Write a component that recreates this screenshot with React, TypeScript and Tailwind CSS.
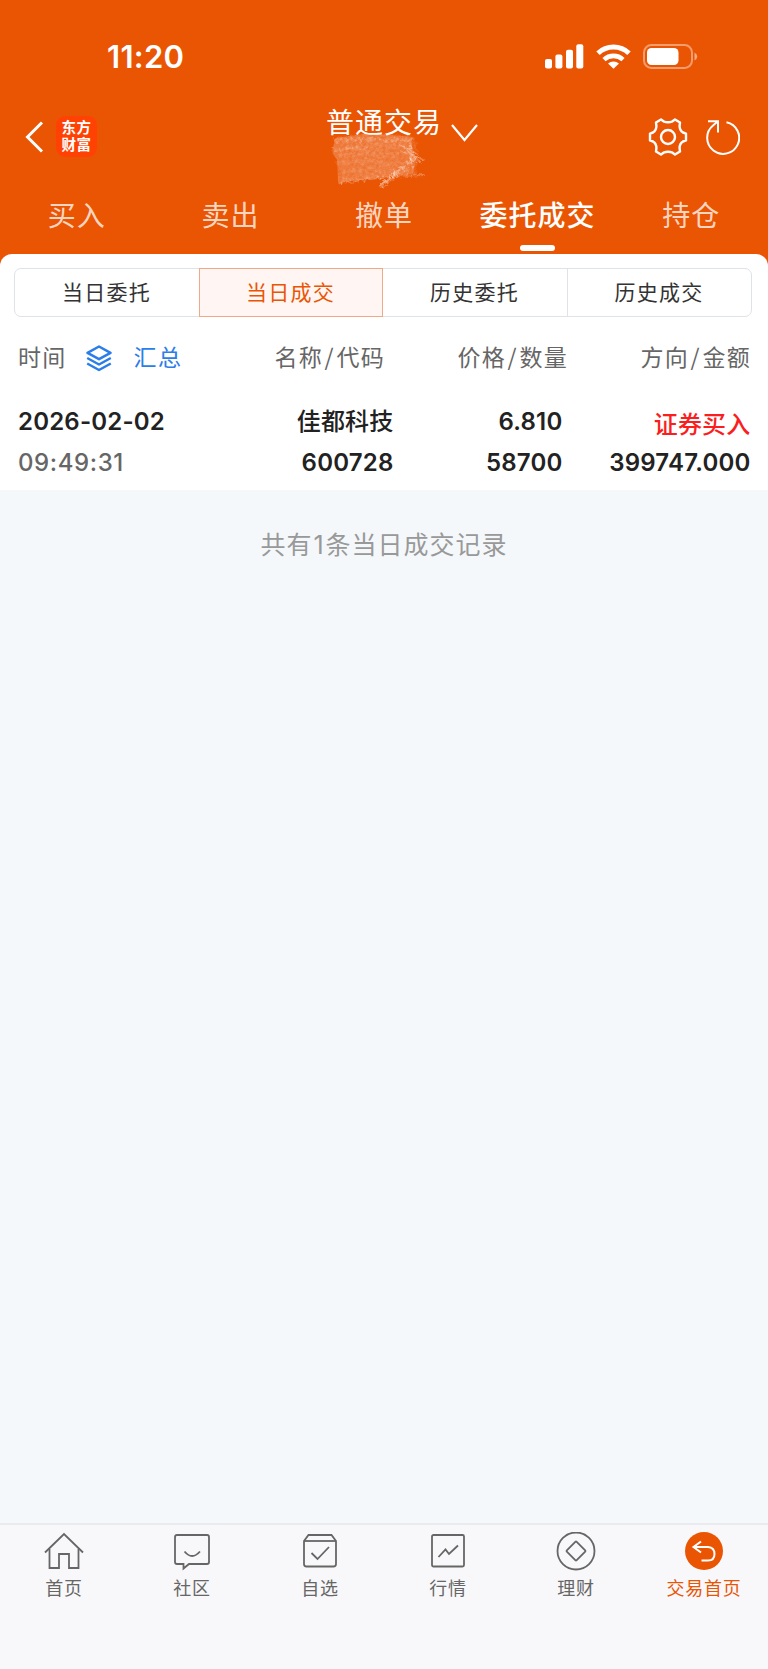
import React, { useState } from 'react';
import clsx from 'clsx';

interface Deal {
  date: string;
  time: string;
  name: string;
  code: string;
  price: string;
  amount: string;
  direction: string;
  total: string;
}

const tabs = ['买入', '卖出', '撤单', '委托成交', '持仓'];
const segments = ['当日委托', '当日成交', '历史委托', '历史成交'];
const columns = [['名称', '代码'], ['价格', '数量'], ['方向', '金额']];

const deals: Deal[] = [
  {
    date: '2026-02-02',
    time: '09:49:31',
    name: '佳都科技',
    code: '600728',
    price: '6.810',
    amount: '58700',
    direction: '证券买入',
    total: '399747.000',
  },
];

const StatusBar = () => (
  <div className="flex h-[94px] items-start justify-between pl-[107px] pr-[70px] pt-[41px]">
    <span className="font-['Inter',sans-serif] text-[31px] font-semibold leading-[32px] tracking-[0.3px]">11:20</span>
    <div className="flex items-center pt-[3px]">
      <svg width="39" height="25" viewBox="0 0 39 25" fill="currentColor">
        <rect x="0" y="15" width="7" height="9.5" rx="2" />
        <rect x="10.4" y="10.5" width="7" height="14" rx="2" />
        <rect x="21" y="5.8" width="7" height="18.7" rx="2" />
        <rect x="31.3" y="0.3" width="7" height="24.2" rx="2" />
      </svg>
      <svg className="ml-[12px]" width="35" height="25" viewBox="0 0 35 25" fill="none" stroke="currentColor">
        <path d="M2 9.2A22.5 22.5 0 0 1 33 9.2" strokeWidth="5" />
        <path d="M8 15.6A14 14 0 0 1 27 15.6" strokeWidth="4.6" />
        <path d="M12 19.5A8.2 8.2 0 0 1 23 19.5L17.5 24.8Z" fill="currentColor" stroke="none" />
      </svg>
      <svg className="ml-[12px]" width="55" height="25" viewBox="0 0 55 25" fill="none">
        <rect x="1" y="1" width="48" height="23" rx="7.5" stroke="white" strokeOpacity="0.42" strokeWidth="2" />
        <rect x="4" y="4" width="31.5" height="17" rx="4.5" fill="white" />
        <path d="M51.5 8.5Q54.2 9.8 54.2 12.5T51.5 16.5Z" fill="white" fillOpacity="0.5" />
      </svg>
    </div>
  </div>
);

const Scribble = () => (
  <svg className="absolute left-[27px] top-[36px]" width="120" height="62" viewBox="0 0 120 62" fill="none">
    <defs>
      <filter id="chalk" x="-5%" y="-5%" width="110%" height="110%">
        <feTurbulence type="fractalNoise" baseFrequency="0.3" numOctaves="3" seed="4" result="noise" />
        <feDisplacementMap in="SourceGraphic" in2="noise" scale="6" result="rough" />
        <feColorMatrix in="noise" type="matrix" values="0 0 0 0 1  0 0 0 0 1  0 0 0 0 1  0 1.6 0 0 -0.2" result="grain" />
        <feComposite in="rough" in2="grain" operator="in" />
      </filter>
    </defs>
    <path d="M9 8L44 3L86 7L86 16L90 30L87 44L62 46L12 53L11 30L7 24Z" fill="white" fillOpacity="0.15" />
    <g filter="url(#chalk)" stroke="white" strokeLinecap="round">
      <path d="M8 8L44 3L88 6L92 23L90 44L60 47L12 54L12 30L6 24Z" fill="white" fillOpacity="0.14" stroke="none" />
      <path d="M10 10L84 8L14 18L92 14L12 26L88 22L10 34L86 32L14 42L88 40L14 50L76 44" strokeOpacity="0.12" strokeWidth="3" />
      <path d="M10 11L52 9M8 20L40 18M60 11L86 10" strokeOpacity="0.2" strokeWidth="4" />
      <path d="M72 14L92 24L80 20L94 32M84 12L86 38M78 22L98 30" strokeOpacity="0.45" strokeWidth="1.8" />
      <path d="M56 55L66 46L90 28" strokeOpacity="0.45" strokeWidth="3.5" />
      <path d="M56 56L68 45" strokeOpacity="0.35" strokeWidth="5" />
      <path d="M14 53L60 47L98 45" strokeOpacity="0.32" strokeWidth="2" />
    </g>
  </svg>
);

const TitleBar = () => (
  <div className="grid h-[90px] grid-cols-[1fr_170px_1fr] items-start">
    <div className="flex items-center pl-[25px] pt-[22px]">
      <svg width="19" height="32" viewBox="0 0 19 32" fill="none" stroke="currentColor" strokeWidth="3">
        <path d="M17 1.500L2.500 16L17 30.500" />
      </svg>
      <div className="ml-[12px] flex h-[41px] w-[41px] flex-col items-center justify-center rounded-[9px] bg-[#ff4203] font-['Liberation_Sans','Noto_Sans_CJK_SC',sans-serif] text-[14.5px] font-bold leading-[17px] tracking-[0.5px]">
        <span>东方</span>
        <span>财富</span>
      </div>
    </div>
    <div className="relative flex items-start pl-[27px] pt-[7px]">
      <Scribble />
      <span className="relative whitespace-nowrap text-[28px] leading-[40px] tracking-[1px]">普通交易</span>
      <svg className="ml-[9px] mt-[22px] shrink-0" width="28" height="20" viewBox="0 0 28 20" fill="none" stroke="currentColor" strokeWidth="2.2">
        <path d="M1 2L13.500 17L26 2" />
      </svg>
    </div>
    <div className="flex items-center justify-end pr-[28px] pt-[22.5px]">
      <svg width="40" height="40" viewBox="0 0 40 40" fill="none" stroke="currentColor" strokeWidth="2.4" strokeLinejoin="round">
        <path d="M13 2.500L15.500 4.300Q20 6.200 24.500 4.300L27 2.500L32 5.500L31.600 9Q31.600 13.500 35 15.500L38 16.600V23.400L35 24.500Q31.600 26.500 31.600 31L32 34.500L27 37.500L24.500 35.700Q20 33.800 15.500 35.700L13 37.500L8 34.500L8.400 31Q8.400 26.500 5 24.500L2 23.400V16.600L5 15.500Q8.400 13.500 8.400 9L8 5.500Z" />
        <circle cx="20" cy="20" r="7" />
      </svg>
      <svg className="ml-[17px]" width="35" height="36" viewBox="0 0 35 36" fill="none" stroke="currentColor" strokeWidth="2">
        <path d="M21.500 3.200A16 16 0 1 1 8 6.500L12.500 2.500" />
        <path d="M3 2.200H13V13.500" />
      </svg>
    </div>
  </div>
);

const LayersIcon = () => (
  <svg width="26" height="27" viewBox="0 0 26 27" fill="none" stroke="#2b7de9" strokeWidth="2.5" strokeLinejoin="round">
    <path d="M13 1.500L24.500 7.800L13 14.200L1.500 7.800Z" />
    <path d="M1.200 13L13 19.500L24.800 13" />
    <path d="M1.200 18.500L13 25L24.800 18.500" />
  </svg>
);

const navItems = [
  {
    label: '首页',
    icon: (
      <>
        <path d="M1 20.500L20 2L39 20.500" />
        <path d="M5.500 17V36H15V22H25V36H34.500V17" />
      </>
    ),
  },
  {
    label: '社区',
    icon: (
      <>
        <path d="M5 3H35Q37 3 37 5V30Q37 32 35 32H17L11.500 36.500V32H5Q3 32 3 30V5Q3 3 5 3Z" />
        <path d="M12.500 19.500Q20 28.500 28 19.500" />
      </>
    ),
  },
  {
    label: '自选',
    icon: (
      <>
        <path d="M4 9L8.500 3H31.500L36 9V32Q36 34.500 33.500 34.500H6.500Q4 34.500 4 32Z" />
        <path d="M4 9H36" />
        <path d="M11.500 21L17.500 27L29 15" />
      </>
    ),
  },
  {
    label: '行情',
    icon: (
      <>
        <rect x="4" y="3" width="32" height="31.500" rx="1.500" />
        <path d="M10.500 25L17.500 17.500L21 22L30 13.500" />
      </>
    ),
  },
  {
    label: '理财',
    icon: (
      <>
        <circle cx="20" cy="19" r="18.500" />
        <rect x="13" y="12" width="14" height="14" rx="1" transform="rotate(45 20 19)" />
      </>
    ),
  },
];

const BottomNav = () => (
  <nav className="grid h-[146px] grid-cols-6 items-start border-t-2 border-[#e9ebee] bg-[#f8f8fb] pt-[7px] text-[#666]">
    {navItems.map(item => (
      <div key={item.label} className="flex flex-col items-center">
        <svg width="40" height="40" viewBox="0 0 40 40" fill="none" stroke="currentColor" strokeWidth="1.800">
          {item.icon}
        </svg>
        <span className="mt-[0.500px] text-[18px] leading-[28px] tracking-[0.800px]">{item.label}</span>
      </div>
    ))}
    <div className="flex flex-col items-center text-[#ea5504]">
      <svg width="40" height="40" viewBox="0 0 40 40" fill="none">
        <circle cx="20" cy="19" r="19" fill="#ea5504" />
        <path d="M17 9.500L9.500 15L17 20.500M9.500 15H24Q30.500 15.500 30.500 22T24 28.500H17.500" stroke="white" strokeWidth="2" />
      </svg>
      <span className="mt-[0.500px] text-[18px] leading-[28px] tracking-[0.800px]">交易首页</span>
    </div>
  </nav>
);

export default function App() {
  const [activeTab, setActiveTab] = useState('委托成交');
  const [activeSegment, setActiveSegment] = useState('当日成交');

  return (
    <div className="flex h-[1669px] w-[768px] flex-col overflow-hidden bg-[#f4f8fa] font-['Noto_Sans_CJK_SC',sans-serif]">
      <header className="h-[266px] shrink-0 bg-[#ea5504] text-white">
        <StatusBar />
        <TitleBar />
        <div className="grid h-[70px] grid-cols-5">
          {tabs.map(tab => (
            <button
              key={tab}
              type="button"
              onClick={() => setActiveTab(tab)}
              className={clsx(
                'flex flex-col items-center whitespace-nowrap pt-[10px] text-[28px] leading-[40px] tracking-[1px]',
                activeTab === tab ? 'font-medium' : 'font-normal text-[#fcd5c0]'
              )}
            >
              {tab}
              {activeTab === tab && <span className="mt-[11px] h-[6px] w-[35px] rounded-full bg-white"></span>}
            </button>
          ))}
        </div>
      </header>

      <main className="-mt-[12px] flex-1">
        <section className="h-[236px] rounded-t-[12px] bg-white pt-[14px]">
          <div className="ml-[14px] mr-[16px] grid h-[49px] grid-cols-4 rounded-[7px] border border-[#dfe2e6]">
            {segments.map((segment, i) => (
              <button
                key={segment}
                type="button"
                onClick={() => setActiveSegment(segment)}
                className={clsx(
                  '-my-px pb-[3px] pr-[1px] text-[21px] leading-[44px] tracking-[1.300px]',
                  activeSegment === segment
                    ? 'border border-[#f0a988] bg-[#fff5f2] text-[#ea5504]'
                    : 'border-y border-transparent text-[#333]',
                  i === 3 && 'border-l border-l-[#dfe2e6]'
                )}
              >
                {segment}
              </button>
            ))}
          </div>

          <div className="mt-[22px] grid grid-cols-[210px_1fr_183px_183px] pl-[18px] pr-[17px] text-[23px] leading-[34px] tracking-[1.300px] text-[#666]">
            <div className="flex items-center">
              时间
              <span className="ml-[19px] mt-[5px]"><LayersIcon /></span>
              <span className="ml-[22px] text-[#2b7de9]">汇总</span>
            </div>
            {columns.map(([top, bottom]) => (
              <div key={top} className="text-right">
                {top}<span className="mx-[1.500px]">/</span>{bottom}
              </div>
            ))}
          </div>

          {deals.map(deal => (
            <div
              key={deal.code}
              className="mt-[31px] grid grid-cols-[210px_1fr_169px_188px] gap-y-[2px] pl-[18px] pr-[17.500px] font-['Inter','Noto_Sans_CJK_SC',sans-serif] text-[24px] font-semibold leading-[36px] tracking-[0.200px] text-[#222]"
            >
              <div>{deal.date}</div>
              <div className="text-right font-medium">{deal.name}</div>
              <div className="text-right">{deal.price}</div>
              <div className="pt-[3px] text-right font-medium text-[#fa1e1e]">{deal.direction}</div>
              <div className="font-[550] tracking-[0.600px] text-[#666]">{deal.time}</div>
              <div className="text-right">{deal.code}</div>
              <div className="text-right">{deal.amount}</div>
              <div className="text-right">{deal.total}</div>
            </div>
          ))}
        </section>
        <p className="mt-[35px] text-center text-[25px] leading-[36px] tracking-[1px] text-[#999]">
          共有<span className="mx-[1px] font-['Inter',sans-serif]">{deals.length}</span>条当日成交记录
        </p>
      </main>

      <BottomNav />
    </div>
  );
}
